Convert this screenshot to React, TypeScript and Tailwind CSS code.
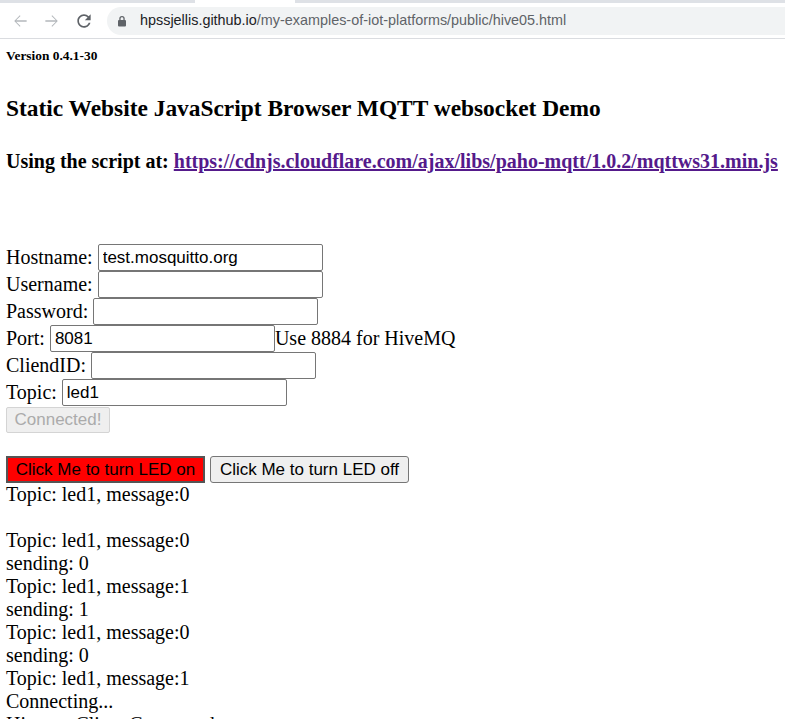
const fields = [
  { label: 'Hostname:', value: 'test.mosquitto.org' },
  { label: 'Username:', value: '' },
  { label: 'Password:', value: '' },
  { label: 'Port:', value: '8081', note: 'Use 8884 for HiveMQ' },
  { label: 'CliendID:', value: '' },
  { label: 'Topic:', value: 'led1' },
];

const log = [
  'Topic: led1, message:0',
  '',
  'Topic: led1, message:0',
  'sending: 0',
  'Topic: led1, message:1',
  'sending: 1',
  'Topic: led1, message:0',
  'sending: 0',
  'Topic: led1, message:1',
  'Connecting...',
  'Hivemq Client Connected',
];

function BrowserBar() {
  return (
    <div className="overflow-hidden bg-white font-['Liberation_Sans',Arial,sans-serif]">
      {/* tab strip remnant */}
      <div className="flex h-[3px]">
        <div className="w-[195px] bg-[#dee1e6]" />
        <div className="w-[100px] bg-white" />
        <div className="flex-1 bg-[#dee1e6]" />
      </div>
      <div className="flex h-[36px] items-center border-b border-[#dadce0] pl-[4px]">
        <div className="flex w-[32px] justify-center">
          <svg width="20" height="20" viewBox="0 0 24 24" fill="#b4b8bc">
            <path d="M20 11.2H7.4l5.2-5.2-.85-.85L5.1 12l6.65 6.85.85-.85-5.2-5.2H20z" />
          </svg>
        </div>
        <div className="flex w-[32px] justify-center">
          <svg width="20" height="20" viewBox="0 0 24 24" fill="#b4b8bc">
            <path d="M4 11.2h12.6l-5.2-5.2.85-.85L18.9 12l-6.65 6.85-.85-.85 5.2-5.2H4z" />
          </svg>
        </div>
        <div className="flex w-[32px] justify-center">
          <svg width="20" height="20" viewBox="0 0 24 24" fill="#5f6368">
            <path d="M17.65 6.35C16.2 4.9 14.21 4 12 4c-4.42 0-7.99 3.58-7.99 8s3.57 8 7.99 8c3.730 0 6.84-2.55 7.73-6h-2.08c-.82 2.33-3.04 4-5.65 4-3.31 0-6-2.690-6-6s2.69-6 6-6c1.66 0 3.14.69 4.22 1.78L13 11h7V4l-2.35 2.35z" />
          </svg>
        </div>
        <div className="-mr-[40px] ml-[7px] flex h-[28px] flex-1 items-center rounded-full bg-[#f1f3f4] pl-[10px]">
          <svg width="10" height="12" viewBox="0 0 10 12" fill="#5f6368">
            <path d="M2.3 5V3.6a2.7 2.7 0 0 1 5.4 0V5h-1.3V3.6a1.4 1.4 0 0 0-2.8 0V5z" />
            <rect x="1" y="5" width="8" height="6.5" rx="1" />
          </svg>
          <span className="ml-[13px] whitespace-nowrap text-[14.4px] text-[#202124]">
            hpssjellis.github.io
            <span className="text-[#5f6368]">/my-examples-of-iot-platforms/public/hive05.html</span>
          </span>
        </div>
      </div>
    </div>
  );
}

export default function App() {
  return (
    <div className="min-h-screen bg-white">
      <BrowserBar />
      <main className="pl-[6px] font-['Liberation_Serif','Times_New_Roman',serif] text-[20px] leading-[23px] text-black">
        <div className="mt-[9px] text-[13.4px] leading-[15px] font-bold">Version 0.4.1-30</div>
        <h3 className="mt-[32px] text-[23.4px] leading-[27px] font-bold">
          Static Website JavaScript Browser MQTT websocket Demo
        </h3>
        <h4 className="mt-[28px] whitespace-nowrap text-[20px] leading-[23px] font-bold">
          Using the script at:{' '}
          <a href="#" className="text-[#551a8b] underline">
            https://cdnjs.cloudflare.com/ajax/libs/paho-mqtt/1.0.2/mqttws31.min.js
          </a>
        </h4>

        <div className="mt-[71px]">
          {fields.map((f) => (
            <div key={f.label} className="flex h-[27px] items-center">
              <span>{f.label}</span>
              <input
                readOnly
                value={f.value}
                className="ml-[5px] h-[27px] w-[225px] rounded-[2px] border border-[#767676] bg-white px-[4px] font-['Liberation_Sans',Arial,sans-serif] text-[17px] text-black outline-none"
              />
              {f.note && <span>{f.note}</span>}
            </div>
          ))}
          <div className="flex h-[27px] items-center">
            <button
              disabled
              className="h-[26px] w-[104px] rounded-[2px] border border-[#d4d4d4] bg-[#efefef] font-['Liberation_Sans',Arial,sans-serif] text-[17px] text-[#ababab]"
            >
              Connected!
            </button>
          </div>
        </div>

        <div className="h-[23px]" />

        <div className="flex h-[27px] items-center gap-[5px]">
          <button className="h-[27px] w-[199px] border-2 border-[#555555] bg-[#ff0000] font-['Liberation_Sans',Arial,sans-serif] text-[17px] text-black">
            Click Me to turn LED on
          </button>
          <button className="h-[27px] w-[199px] rounded-[3px] border border-[#767676] bg-[#efefef] font-['Liberation_Sans',Arial,sans-serif] text-[17px] text-black">
            Click Me to turn LED off
          </button>
        </div>

        <div>
          {log.map((line, i) => (
            <div key={i} className="h-[23px] whitespace-nowrap">
              {line}
            </div>
          ))}
        </div>
      </main>
    </div>
  );
}
